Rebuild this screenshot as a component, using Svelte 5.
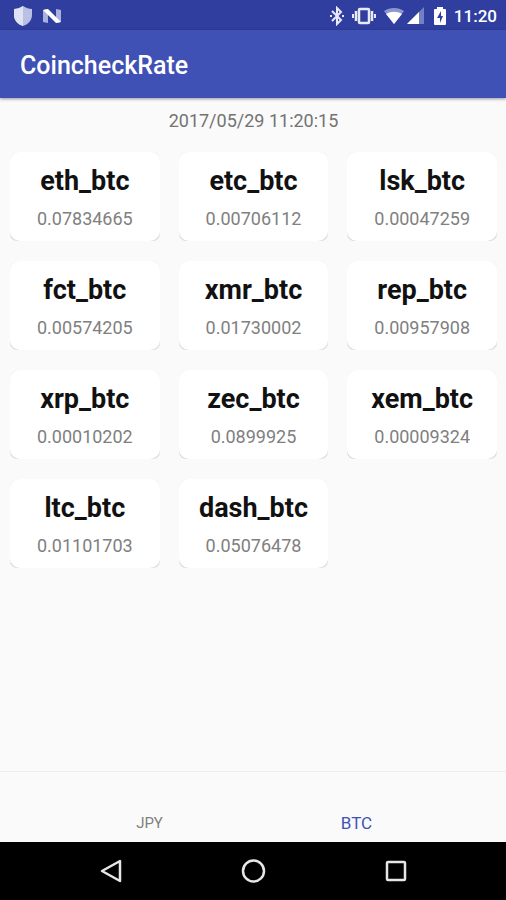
<script>
  let updatedAt = '2017/05/29 11:20:15';
  let selected = 'BTC';

  const tabs = ['JPY', 'BTC'];

  const rates = [
    { pair: 'eth_btc', rate: '0.07834665' },
    { pair: 'etc_btc', rate: '0.00706112' },
    { pair: 'lsk_btc', rate: '0.00047259' },
    { pair: 'fct_btc', rate: '0.00574205' },
    { pair: 'xmr_btc', rate: '0.01730002' },
    { pair: 'rep_btc', rate: '0.00957908' },
    { pair: 'xrp_btc', rate: '0.00010202' },
    { pair: 'zec_btc', rate: '0.0899925' },
    { pair: 'xem_btc', rate: '0.00009324' },
    { pair: 'ltc_btc', rate: '0.01101703' },
    { pair: 'dash_btc', rate: '0.05076478' }
  ];
</script>

<div class="screen">
  <div class="status-bar">
    <div class="notifications">
      <svg width="20" height="22" viewBox="0 0 20 22" aria-hidden="true">
        <path d="M10 1 C13 3 16 4 19 4 V10 C19 15.500 15 19.500 10 21 C5 19.500 1 15.500 1 10 V4 C4 4 7 3 10 1 Z" fill="#b9c0e4" />
        <path d="M10 1 C7 3 4 4 1 4 V10 C1 15.500 5 19.500 10 21 Z" fill="#dfe2f3" />
      </svg>
      <svg width="20" height="16" viewBox="0 0 20 16" aria-hidden="true">
        <path d="M1 2 L6 1 V15 L1 14 Z M14 1 L19 2 V14 L14 15 Z" fill="#a9b2dd" />
        <path d="M1 2 L6 1 L19 14 L14 15 Z" fill="#fff" />
      </svg>
    </div>
    <div class="system-icons">
      <svg width="14" height="20" viewBox="0 0 14 20" aria-hidden="true">
        <path d="M2 5 L11 14 L7 18 V2 L11 6 L2 15" fill="none" stroke="#e8eaf6" stroke-width="2" />
        <path d="M0 9 h2 v2 h-2 z M12 9 h2 v2 h-2 z" fill="#e8eaf6" />
      </svg>
      <svg width="24" height="18" viewBox="0 0 24 18" aria-hidden="true">
        <rect x="7" y="2" width="10" height="14" rx="1" fill="none" stroke="#e8eaf6" stroke-width="2.500" />
        <path d="M4 4 V14 M20 4 V14" stroke="#e8eaf6" stroke-width="2.500" />
        <path d="M1 7 V11 M23 7 V11" stroke="#e8eaf6" stroke-width="2" />
      </svg>
      <svg class="wifi" width="20" height="16" viewBox="0 0 20 16" aria-hidden="true">
        <path d="M0 3 C6 -1 14 -1 20 3 L10 16 Z" fill="#8c97d0" />
        <path d="M2 6 C7 3 13 3 18 6 L10 16 Z" fill="#fff" />
      </svg>
      <svg width="17" height="17" viewBox="0 0 17 17" aria-hidden="true">
        <path d="M0 17 L17 0 V17 Z" fill="#7480c4" />
        <path d="M0 17 L12 5 V17 Z" fill="#fff" />
      </svg>
      <svg class="battery" width="12" height="18" viewBox="0 0 12 18" aria-hidden="true">
        <path d="M3 0 H9 V2 H11 Q12 2 12 3 V17 Q12 18 11 18 H1 Q0 18 0 17 V3 Q0 2 1 2 H3 Z" fill="#fff" />
        <path d="M7 4 L3 11 H6 V16 L9 9 H7 Z" fill="#303f9f" />
      </svg>
      <span class="clock">11:20</span>
    </div>
  </div>

  <header class="app-bar">
    <h1>CoincheckRate</h1>
  </header>

  <main>
    <p class="updated">{updatedAt}</p>
    <div class="grid">
      {#each rates as item}
        <section class="card">
          <div class="card-body">
            <h2>{item.pair}</h2>
            <p>{item.rate}</p>
          </div>
        </section>
      {/each}
    </div>
  </main>

  <nav class="tabs">
    {#each tabs as tab}
      <button class="tab" class:active={tab === selected} on:click={() => (selected = tab)}>
        {tab}
      </button>
    {/each}
  </nav>

  <div class="nav-bar">
    <button aria-label="Back">
      <svg width="26" height="26" viewBox="0 0 26 26">
        <path d="M22 3 V23 L4 13 Z" fill="none" stroke="#e6e6e6" stroke-width="2.500" stroke-linejoin="round" />
      </svg>
    </button>
    <button aria-label="Home">
      <svg width="26" height="26" viewBox="0 0 26 26">
        <circle cx="13.500" cy="13" r="10.500" fill="none" stroke="#e6e6e6" stroke-width="2.500" />
      </svg>
    </button>
    <button aria-label="Overview">
      <svg width="26" height="26" viewBox="0 0 26 26">
        <rect x="5" y="4" width="18" height="18" rx="1" fill="none" stroke="#e6e6e6" stroke-width="2.500" />
      </svg>
    </button>
  </div>
</div>

<style>
  :global(body) {
    margin: 0;
  }

  .screen {
    display: flex;
    flex-direction: column;
    min-height: 100vh;
    background: #fafafa;
    font-family: Roboto, sans-serif;
  }

  h1, h2, p {
    margin: 0;
  }

  button {
    padding: 0;
    border: none;
    background: none;
    font-family: inherit;
    cursor: pointer;
  }

  svg {
    display: block;
  }

  .status-bar {
    display: flex;
    justify-content: space-between;
    align-items: center;
    height: 29px;
    padding: 1px 9px 0 13px;
    background: #303f9f;
  }

  .notifications {
    display: flex;
    align-items: center;
    gap: 9px;
  }

  .system-icons {
    display: flex;
    align-items: center;
    gap: 8px;
  }

  .wifi {
    margin-right: -5px;
  }

  .battery {
    margin-left: 2px;
  }

  .clock {
    color: #fff;
    font-size: 17px;
    font-weight: 500;
    line-height: 20px;
  }

  .app-bar {
    display: flex;
    align-items: center;
    height: 64px;
    padding: 4px 20px 0;
    background: #3f51b5;
    box-shadow: 0 1px 3px rgba(0, 0, 0, 0.4);
    z-index: 1;
  }

  h1 {
    color: #fff;
    font-size: 25px;
    font-weight: 500;
    line-height: 32px;
  }

  main {
    flex: 1;
    padding: 12px 9px 20px 10px;
  }

  .updated {
    color: #737373;
    font-size: 18px;
    line-height: 22px;
    text-align: center;
  }

  .grid {
    display: grid;
    grid-template-columns: repeat(3, 1fr);
    gap: 20px 19px;
    margin-top: 20px;
  }

  /* the tighter radius leaves a sliver of shade at the lower corners */
  .card {
    border-radius: 7px;
    background: linear-gradient(#f6f6f6 50%, #dcdcdc);
  }

  .card-body {
    padding: 11px 0 10px;
    border-radius: 10px;
    background: #fff;
    text-align: center;
  }

  .card h2 {
    color: #111;
    font-size: 27px;
    font-weight: 700;
    line-height: 36px;
  }

  .card p {
    margin-top: 8px;
    color: #808080;
    font-size: 18px;
    line-height: 24px;
  }

  .tabs {
    display: flex;
    justify-content: center;
    height: 70px;
    border-top: 1px solid #eee;
  }

  .tab {
    display: flex;
    flex: 0 1 207px;
    align-items: flex-end;
    justify-content: center;
    padding-bottom: 9px;
    color: #808080;
    font-size: 15px;
    line-height: 20px;
  }

  .tab.active {
    color: #3f51b5;
    font-size: 17px;
  }

  .nav-bar {
    display: flex;
    justify-content: center;
    height: 58px;
    background: #000;
  }

  .nav-bar button {
    display: flex;
    flex: 0 1 142px;
    align-items: center;
    justify-content: center;
  }
</style>
